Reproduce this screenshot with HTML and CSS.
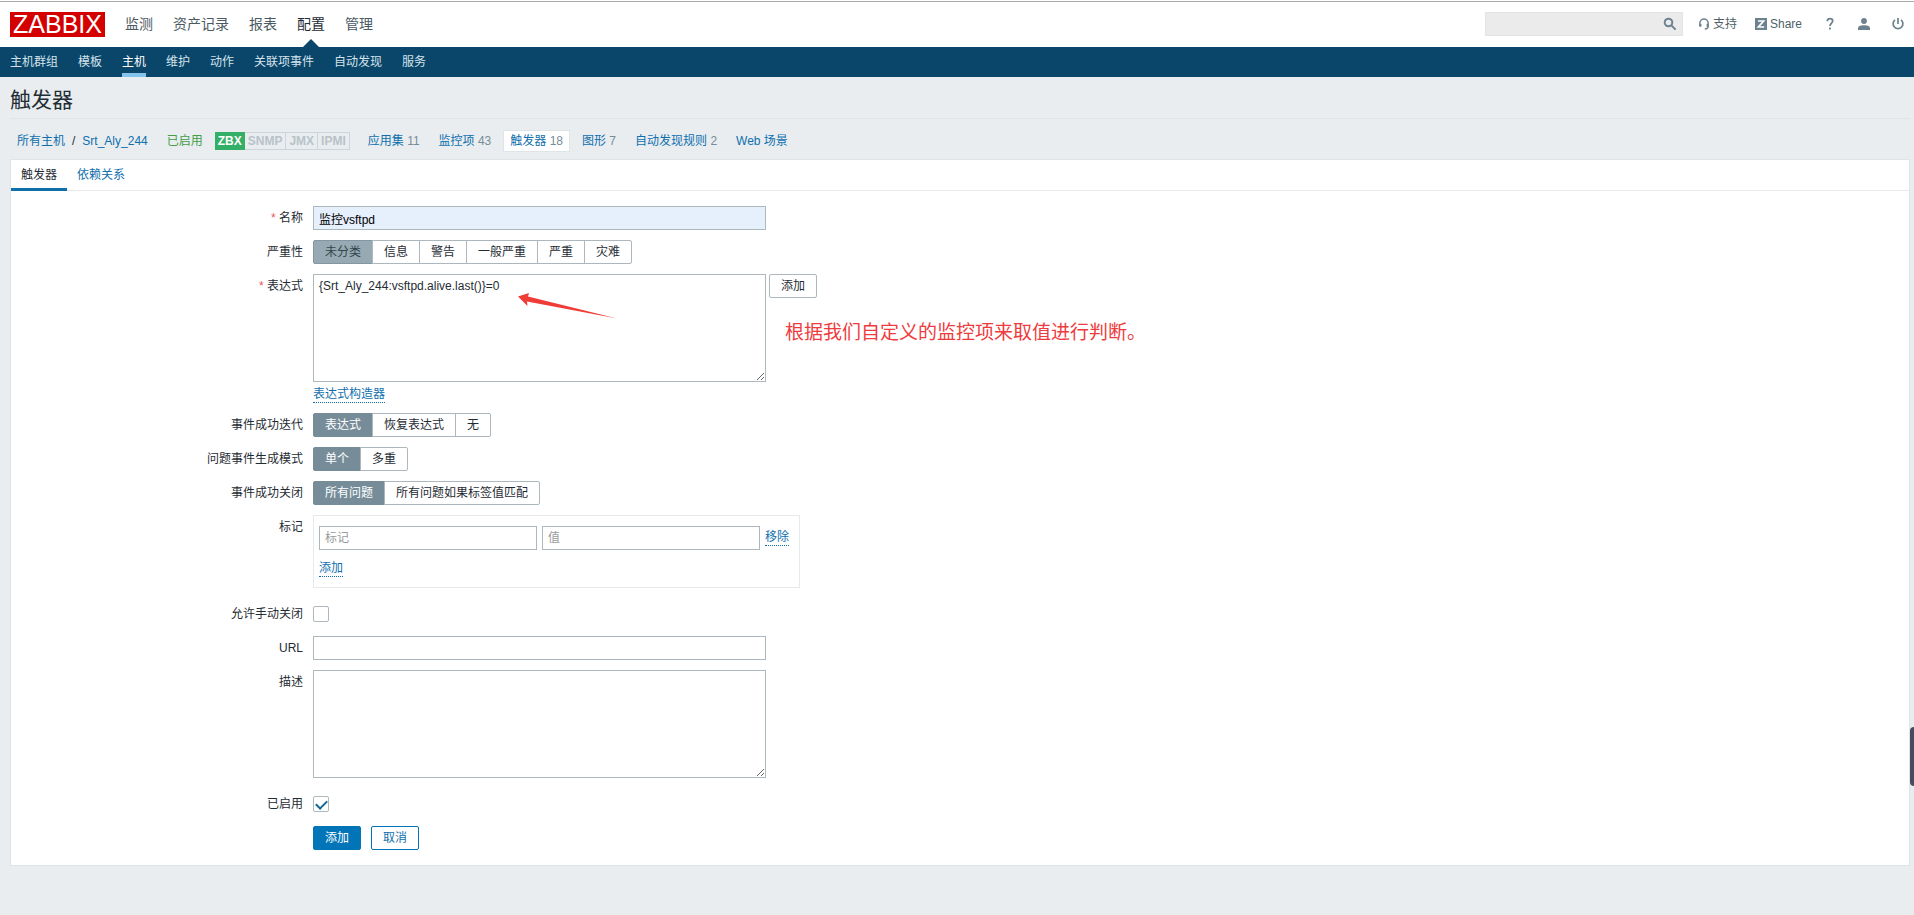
FILE: index.html
```html
<!DOCTYPE html>
<html lang="zh-CN">
<head>
<meta charset="utf-8">
<title>触发器</title>
<meta name="viewport" content="width=device-width, initial-scale=1">
<link rel="stylesheet" href="styles.css">
</head>
<body>
<header class="top">
  <a class="logo" href="#">ZABBIX</a>
  <nav class="main-nav">
    <a href="#">监测</a>
    <a href="#">资产记录</a>
    <a href="#">报表</a>
    <a href="#" class="selected">配置</a>
    <a href="#">管理</a>
  </nav>
  <div class="tools">
    <form class="search">
      <input type="text" aria-label="搜索">
      <button type="button" aria-label="搜索">
        <svg width="14" height="14" viewBox="0 0 14 14" fill="none" stroke="#6c838f" stroke-width="2"><circle cx="5.5" cy="5.5" r="3.8"/><path d="M8.4 8.4l4.2 4.2"/></svg>
      </button>
    </form>
    <a class="tool support" href="#">
      <svg width="12" height="12" viewBox="0 0 12 12" fill="none" stroke="#6c838f"><path d="M1.8 8V5.2a4.2 4.2 0 0 1 8.4 0v3.3q0 2.4-3.4 2.5" stroke-width="1.4"/><path d="M2.4 5.8v3M9.6 5.8v3" stroke-width="2"/></svg>
      支持</a>
    <a class="tool share" href="#">
      <svg width="12" height="12" viewBox="0 0 12 12"><rect width="12" height="12" fill="#6c838f"/><path d="M3 3h5.6L3.4 9h5.8" fill="none" stroke="#fff" stroke-width="1.7"/></svg>
      Share</a>
    <a class="tool help" href="#" aria-label="帮助">
      <svg width="12" height="14" viewBox="0 0 12 14" fill="none" stroke="#6c838f" stroke-width="1.8"><path d="M3.3 4.2C3.3 2.4 4.4 1.6 6 1.6s2.7.9 2.7 2.4C8.7 6 6 6.3 6 9"/><path d="M6 10.6v2"/></svg>
    </a>
    <a class="tool user" href="#" aria-label="用户">
      <svg width="12" height="12" viewBox="0 0 12 12" fill="#6c838f"><circle cx="6" cy="3" r="2.9"/><path d="M0 12V10.2C0 8 3 7.2 6 7.2s6 .8 6 3V12z"/></svg>
    </a>
    <a class="tool power" href="#" aria-label="退出">
      <svg width="12" height="12" viewBox="0 0 12 12" fill="none" stroke="#6c838f" stroke-width="1.7"><path d="M6 0v6M3 1.8a4.9 4.9 0 1 0 6 0"/></svg>
    </a>
  </div>
</header>
<nav class="sub-nav">
  <a href="#">主机群组</a>
  <a href="#">模板</a>
  <a href="#" class="selected">主机</a>
  <a href="#">维护</a>
  <a href="#">动作</a>
  <a href="#">关联项事件</a>
  <a href="#">自动发现</a>
  <a href="#">服务</a>
</nav>
<main class="page">
  <h1>触发器</h1>
  <div class="object-nav">
    <div class="crumbs"><a href="#">所有主机</a><span>/</span><a href="#">Srt_Aly_244</a></div>
    <span class="status">已启用</span>
    <div class="agents"><span class="on">ZBX</span><span>SNMP</span><span>JMX</span><span>IPMI</span></div>
    <div class="links">
      <a href="#">应用集 <span>11</span></a>
      <a href="#">监控项 <span>43</span></a>
      <a href="#" class="selected">触发器 <span>18</span></a>
      <a href="#">图形 <span>7</span></a>
      <a href="#">自动发现规则 <span>2</span></a>
      <a href="#">Web 场景</a>
    </div>
  </div>
  <section class="panel">
    <div class="tabs" role="tablist">
      <button type="button" role="tab" aria-selected="true" class="selected">触发器</button>
      <button type="button" role="tab" aria-selected="false">依赖关系</button>
    </div>
    <form class="form">
      <div class="row">
        <label class="name required" for="name">名称</label>
        <div class="field"><input class="text wide filled" id="name" type="text" value="监控vsftpd"></div>
      </div>
      <div class="row">
        <span class="name" id="l-sev">严重性</span>
        <div class="field segments severity" role="radiogroup" aria-labelledby="l-sev">
          <label><input type="radio" name="sev" checked><span>未分类</span></label>
          <label><input type="radio" name="sev"><span>信息</span></label>
          <label><input type="radio" name="sev"><span>警告</span></label>
          <label><input type="radio" name="sev"><span>一般严重</span></label>
          <label><input type="radio" name="sev"><span>严重</span></label>
          <label><input type="radio" name="sev"><span>灾难</span></label>
        </div>
      </div>
      <div class="row">
        <label class="name required" for="expr">表达式</label>
        <div class="field expression">
          <div class="expression-line">
            <textarea class="wide" id="expr">{Srt_Aly_244:vsftpd.alive.last()}=0</textarea>
            <button type="button" class="btn grey">添加</button>
          </div>
          <a class="dotted" href="#">表达式构造器</a>
          <svg class="arrow" width="100" height="28" viewBox="0 0 100 28"><path d="M0 4.5L11 1 10 4.5 99 26.5 9 9.500 9.500 14z" fill="#f03c37"/></svg>
          <p class="note">根据我们自定义的监控项来取值进行判断。</p>
        </div>
      </div>
      <div class="row">
        <span class="name" id="l-rec">事件成功迭代</span>
        <div class="field segments" role="radiogroup" aria-labelledby="l-rec">
          <label><input type="radio" name="rec" checked><span>表达式</span></label>
          <label><input type="radio" name="rec"><span>恢复表达式</span></label>
          <label><input type="radio" name="rec"><span>无</span></label>
        </div>
      </div>
      <div class="row">
        <span class="name" id="l-mode">问题事件生成模式</span>
        <div class="field segments" role="radiogroup" aria-labelledby="l-mode">
          <label><input type="radio" name="mode" checked><span>单个</span></label>
          <label><input type="radio" name="mode"><span>多重</span></label>
        </div>
      </div>
      <div class="row">
        <span class="name" id="l-close">事件成功关闭</span>
        <div class="field segments" role="radiogroup" aria-labelledby="l-close">
          <label><input type="radio" name="close" checked><span>所有问题</span></label>
          <label><input type="radio" name="close"><span>所有问题如果标签值匹配</span></label>
        </div>
      </div>
      <div class="row">
        <span class="name">标记</span>
        <div class="field tags">
          <div class="tag-line">
            <input class="text" type="text" placeholder="标记" aria-label="标记">
            <input class="text" type="text" placeholder="值" aria-label="值">
            <a class="dotted" href="#">移除</a>
          </div>
          <a class="dotted" href="#">添加</a>
        </div>
      </div>
      <div class="row">
        <label class="name" for="manual">允许手动关闭</label>
        <div class="field"><input class="check" id="manual" type="checkbox"></div>
      </div>
      <div class="row">
        <label class="name" for="url">URL</label>
        <div class="field"><input class="text wide" id="url" type="text"></div>
      </div>
      <div class="row">
        <label class="name" for="desc">描述</label>
        <div class="field description"><textarea class="wide" id="desc"></textarea></div>
      </div>
      <div class="row">
        <label class="name" for="enabled">已启用</label>
        <div class="field"><input class="check" id="enabled" type="checkbox" checked></div>
      </div>
      <div class="row">
        <div class="field actions">
          <button type="button" class="btn primary">添加</button>
          <button type="button" class="btn outline">取消</button>
        </div>
      </div>
    </form>
  </section>
</main>
<div class="side-handle"></div>
</body>
</html>
```
FILE: styles.css
```css
* { box-sizing: border-box; }

body {
  margin: 0;
  min-height: 100vh;
  background: #e9edf0;
  color: #1f2c33;
  font: 12px/16px "Liberation Sans", "Noto Sans CJK SC", sans-serif;
}

a { color: #0f6fad; text-decoration: none; }

button, input, textarea { font: inherit; color: inherit; }

button { cursor: pointer; }

svg { display: block; }

/* Header */
.top {
  display: flex;
  align-items: center;
  height: 47px;
  padding: 2px 10px 0;
  background: linear-gradient(#fff 1px, #aaa 1px, #aaa 2px, #fff 2px);
}

.logo {
  width: 95px;
  height: 25px;
  margin-right: 20px;
  background: #d40000;
  color: #fff;
  font-size: 25px;
  line-height: 25px;
  text-align: center;
}

.main-nav {
  display: flex;
  align-self: stretch;
  gap: 20px;
  font-size: 14px;
  line-height: 44px;
}

.main-nav a { position: relative; color: #4b5a62; }

.main-nav .selected { color: #1f2c33; }

.main-nav .selected::after {
  content: "";
  position: absolute;
  bottom: 0;
  left: 50%;
  margin-left: -8px;
  border: 8px solid transparent;
  border-top-width: 0;
  border-bottom-color: #0a466a;
}

.tools {
  display: flex;
  align-items: center;
  margin-left: auto;
  padding-bottom: 2px;
}

.search {
  display: flex;
  width: 198px;
  height: 24px;
  margin-right: 15px;
  background: #ebebeb;
  border: 1px solid #e4e4e4;
}

.search input {
  flex: 1;
  min-width: 0;
  border: 0;
  background: none;
}

.search button {
  padding: 0 5px;
  border: 0;
  background: none;
}

.tool {
  display: flex;
  align-items: center;
  gap: 3px;
  color: #4f5f68;
}

.support { margin-right: 18px; }
.share { margin-right: 22px; }
.help { margin-right: 22px; }
.user { margin-right: 22px; }

.sub-nav {
  display: flex;
  gap: 20px;
  height: 30px;
  padding: 0 10px;
  background: #0a466a;
  line-height: 31px;
}

.sub-nav a { color: #d5e3ec; }

.sub-nav .selected {
  color: #fff;
  border-bottom: 4px solid #84c3ec;
}

/* Page heading */
.page { padding: 0 4px 0 10px; }

h1 {
  margin: 0;
  padding: 8px 0 3px;
  border-bottom: 1px solid #dfe4e7;
  font-size: 21px;
  font-weight: 400;
  line-height: 30px;
}

.object-nav {
  display: flex;
  align-items: center;
  height: 40px;
  padding: 4px 7px 0;
}

.crumbs { display: flex; gap: 7px; }

.status { margin: 0 12px 0 19px; color: #429e47; }

.agents {
  display: flex;
  height: 18px;
  margin-right: 11px;
  border: 1px solid #ccd5d9;
  color: #b8c3c8;
  font-weight: 700;
}

.agents span { padding: 0 3px; }

.agents span + span + span { border-left: 1px solid #ccd5d9; }

.agents .on {
  margin: -1px 0 -1px -1px;
  padding: 1px 3px;
  background: #34af67;
  color: #fff;
}

.links { display: flex; gap: 5px; }

.links a {
  padding: 2px 6px;
  border: 1px solid transparent;
}

.links span { color: #768d99; }

.links .selected {
  background: #fff;
  border-color: #dfe4e7;
}

/* Tabbed panel */
.panel {
  border: 1px solid #dfe4e7;
  background: #fff;
}

.tabs {
  display: flex;
  border-bottom: 1px solid #e6eaec;
}

.tabs button {
  height: 30px;
  padding: 0 10px;
  border: 0;
  background: none;
  color: #0f6fad;
}

.tabs .selected {
  margin-bottom: -1px;
  height: 31px;
  padding-top: 2px;
  border-bottom: 3px solid #0f6fa8;
  color: #1f2c33;
}

.form {
  display: flex;
  flex-direction: column;
  gap: 10px;
  padding: 15px 10px;
}

.row {
  display: grid;
  grid-template-columns: 282px 1fr;
  column-gap: 10px;
}

.name { text-align: right; line-height: 24px; }

.required::before { content: "* "; color: #e45959; }

.field {
  grid-column: 2;
  display: flex;
  min-height: 24px;
  align-items: center;
}

.text, textarea {
  margin: 0;
  padding: 0 5px;
  border: 1px solid #acb8be;
  border-radius: 0;
  background: #fff;
}

.text { width: 218px; height: 24px; }

.wide { width: 453px; }

.filled { background: #e6effc; color: #000; }

.text::placeholder { color: #9a9a9a; }

textarea {
  height: 108px;
  padding: 3px 5px;
  resize: both;
}

.description { padding-bottom: 4px; }

.segments label { display: block; }

.segments label + label { margin-left: -1px; }

.segments input {
  position: absolute;
  opacity: 0;
  pointer-events: none;
}

.segments span {
  display: block;
  padding: 0 11px;
  border: 1px solid #acb8be;
  line-height: 22px;
}

.segments label:first-child span { border-radius: 2px 0 0 2px; }

.segments label:last-child span { border-radius: 0 2px 2px 0; }

.segments input:checked + span {
  background: #768d99;
  border-color: #768d99;
  color: #fff;
}

.severity input:checked + span {
  background: #97aab3;
  border-color: #8297a1;
  color: #34444d;
}

.expression {
  position: relative;
  flex-direction: column;
  align-items: flex-start;
  gap: 5px;
}

.expression-line {
  display: flex;
  align-items: flex-start;
  gap: 3px;
}

.dotted {
  border-bottom: 1px dotted #0f6fad;
  line-height: 15px;
}

/* Annotation drawn over the expression field */
.arrow {
  position: absolute;
  left: 205px;
  top: 18px;
}

.note {
  position: absolute;
  left: 472px;
  top: 45px;
  margin: 0;
  color: #ee3b3e;
  font-size: 19px;
  line-height: 28px;
  white-space: nowrap;
}

.tags {
  flex-direction: column;
  align-items: flex-start;
  justify-self: start;
  gap: 11px;
  margin-bottom: 4px;
  padding: 10px 10px 10px 5px;
  border: 1px solid #e6eaec;
}

.tag-line {
  display: flex;
  align-items: center;
  gap: 5px;
}

.check {
  appearance: none;
  width: 16px;
  height: 16px;
  margin: 0;
  border: 1px solid #acb8be;
  border-radius: 2px;
  background: #fff;
}

.check:checked::before {
  content: "";
  display: block;
  width: 9px;
  height: 5px;
  margin: 3px auto 0;
  border: solid #0f6795;
  border-width: 0 0 2px 2px;
  transform: rotate(-45deg);
}

.btn {
  height: 24px;
  padding: 0 11px;
  border: 1px solid #0275b8;
  border-radius: 2px;
  background: #fff;
}

.grey { border-color: #acb8be; }

.primary { background: #0275b8; color: #fff; }

.outline { color: #0f6fad; }

.actions { gap: 10px; }

/* Handle docked at the window's edge */
.side-handle {
  position: fixed;
  top: 727px;
  right: 0;
  width: 4px;
  height: 59px;
  border-radius: 4px 0 0 4px;
  background: #484b5c;
}
```
